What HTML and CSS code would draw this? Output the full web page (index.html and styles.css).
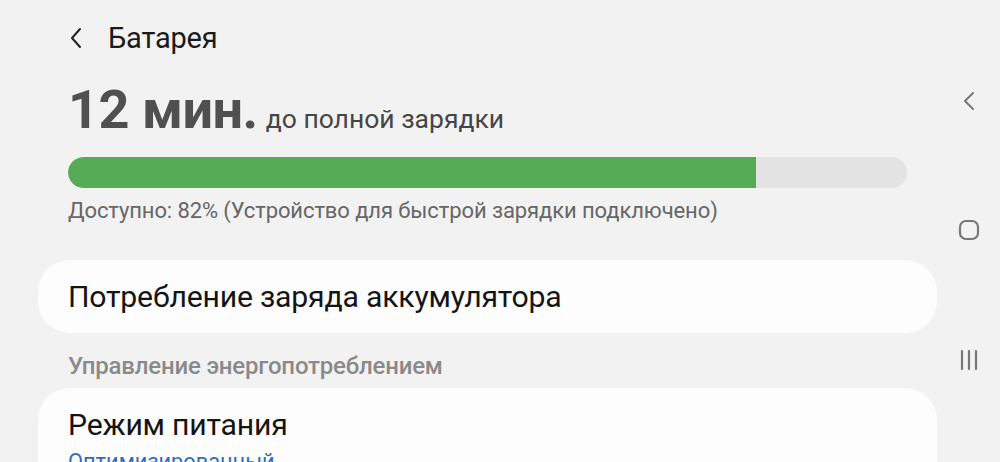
FILE: index.html
```html
<!DOCTYPE html>
<html lang="ru">
<head>
<meta charset="utf-8">
<link rel="stylesheet" href="styles.css">
</head>
<body>
<div class="screen">
  <main class="main">
    <header class="appbar">
      <svg class="back" width="14" height="22" viewBox="0 0 14 22"><path d="M11 2 L3 11 L11 20" fill="none" stroke="#222" stroke-width="2" stroke-linecap="round" stroke-linejoin="round"/></svg>
      <h1 class="title">Батарея</h1>
    </header>
    <section class="summary">
      <div class="time"><span class="big">12 мин.</span><span class="rest">до полной зарядки</span></div>
      <div class="bar"><div class="fill" style="width:82%"></div></div>
      <div class="caption">Доступно: 82% (Устройство для быстрой зарядки подключено)</div>
    </section>
    <div class="card single">
      <div class="item-title">Потребление заряда аккумулятора</div>
    </div>
    <div class="section-head">Управление энергопотреблением</div>
    <div class="card double">
      <div class="item-title">Режим питания</div>
      <div class="item-sub">Оптимизированный</div>
    </div>
  </main>
  <nav class="nav">
    <svg width="14" height="20" viewBox="0 0 14 20"><path d="M11 2 L3 10 L11 18" fill="none" stroke="#777" stroke-width="2" stroke-linecap="round" stroke-linejoin="round"/></svg>
    <svg width="22" height="22" viewBox="0 0 22 22"><rect x="2" y="2" width="18" height="18" rx="6" fill="none" stroke="#777" stroke-width="2.2"/></svg>
    <svg width="20" height="22" viewBox="0 0 20 22"><path d="M3 2 V20 M10 2 V20 M17 2 V20" stroke="#777" stroke-width="2.2" stroke-linecap="round"/></svg>
  </nav>
</div>
</body>
</html>
```

FILE: styles.css
```css
html, body {
  margin: 0;
  padding: 0;
  background: #f2f2f2;
  overflow: hidden;
}
body {
  font-family: Roboto, "Noto Sans", sans-serif;
  color: #111;
}
.screen {
  display: flex;
  width: 1000px;
  height: 462px;
  overflow: hidden;
}
.main {
  flex: none;
  width: 899px;
  padding-left: 38px;
}
.appbar {
  height: 76px;
  display: flex;
  align-items: center;
  padding-left: 31px;
  gap: 25px;
}
.title {
  margin: 0;
  font-size: 29px;
  line-height: 32px;
  font-weight: 400;
  color: #1a1a1a;
  letter-spacing: -0.2px;
}
.summary {
  padding-left: 30px;
  padding-right: 30px;
}
.time {
  margin-top: 4px;
  height: 60px;
  line-height: 60px;
  display: flex;
  align-items: baseline;
  gap: 8px;
  color: #505050;
}
.big {
  font-size: 54px;
  font-weight: 700;
  letter-spacing: -0.5px;
}
.rest {
  font-size: 26.5px;
  color: #454545;
}
.bar {
  margin-top: 17px;
  height: 31px;
  border-radius: 16px;
  background: #e3e3e3;
  overflow: hidden;
}
.fill {
  height: 100%;
  background: #56ab56;
  border-radius: 16px 0 0 16px;
}
.caption {
  margin-top: 10px;
  font-size: 22px;
  line-height: 26px;
  color: #666;
  letter-spacing: -0.1px;
}
.card {
  background: #fdfdfd;
  border-radius: 32px;
  padding: 0 30px;
}
.card.single {
  margin-top: 36px;
  height: 73px;
  display: flex;
  align-items: center;
}
.item-title {
  font-size: 30.2px;
  line-height: 34px;
  color: #141414;
  letter-spacing: -0.2px;
}
.section-head {
  padding-left: 30px;
  margin-top: 19px;
  margin-bottom: 8px;
  font-size: 24px;
  line-height: 28px;
  font-weight: 500;
  color: #8a8a8a;
  letter-spacing: -0.2px;
}
.card.double {
  padding-top: 20px;
  height: 120px;
}
.item-sub {
  margin-top: 7px;
  font-size: 21.8px;
  line-height: 26px;
  color: #2a6fc0;
}
.nav {
  flex: 1;
  display: flex;
  flex-direction: column;
  align-items: center;
  padding-top: 91px;
  gap: 108px;
}
```
